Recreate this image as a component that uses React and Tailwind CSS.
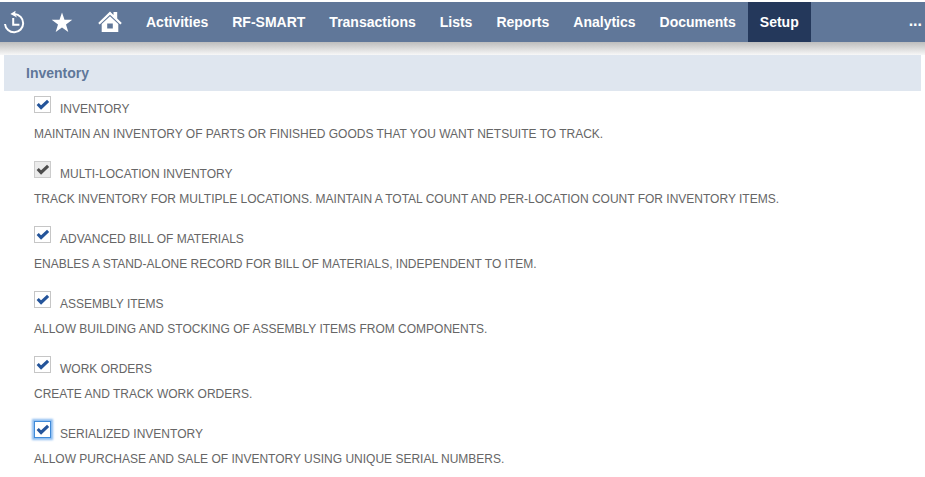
const tabs = ["Activities", "RF-SMART", "Transactions", "Lists", "Reports", "Analytics", "Documents", "Setup"];

const features = [
  { label: "INVENTORY", text: "MAINTAIN AN INVENTORY OF PARTS OR FINISHED GOODS THAT YOU WANT NETSUITE TO TRACK." },
  {
    label: "MULTI-LOCATION INVENTORY",
    text: "TRACK INVENTORY FOR MULTIPLE LOCATIONS. MAINTAIN A TOTAL COUNT AND PER-LOCATION COUNT FOR INVENTORY ITEMS.",
    state: "disabled",
  },
  { label: "ADVANCED BILL OF MATERIALS", text: "ENABLES A STAND-ALONE RECORD FOR BILL OF MATERIALS, INDEPENDENT TO ITEM." },
  { label: "ASSEMBLY ITEMS", text: "ALLOW BUILDING AND STOCKING OF ASSEMBLY ITEMS FROM COMPONENTS." },
  { label: "WORK ORDERS", text: "CREATE AND TRACK WORK ORDERS." },
  {
    label: "SERIALIZED INVENTORY",
    text: "ALLOW PURCHASE AND SALE OF INVENTORY USING UNIQUE SERIAL NUMBERS.",
    state: "focused",
  },
];

const boxStyles = {
  normal: "border-[#c6c6c6] bg-white text-[#24549a]",
  disabled: "border-[#cccccc] bg-[#ebebeb] text-[#4d4d4d]",
  focused: "border-[#3f8ad8] bg-white text-[#24549a] shadow-[0_0_2px_2px_#8cbcf0]",
};

function CheckBox({ state = "normal" }) {
  return (
    <span
      role="checkbox"
      aria-checked="true"
      aria-disabled={state === "disabled"}
      className={`flex size-[17px] shrink-0 items-center justify-center border ${boxStyles[state]}`}
    >
      <svg width="15" height="15" viewBox="0 0 15 15" fill="none" stroke="currentColor" strokeWidth="3.1">
        <path d="M2.7 7L6.1 10.5L13.1 3.9" />
      </svg>
    </span>
  );
}

function HistoryIcon() {
  return (
    <svg width="22" height="24" viewBox="0 0 22 24" fill="none" stroke="white" strokeWidth="2">
      <path d="M2 14A9.1 9.1 0 1 0 11.5 4.1H10" />
      <path d="M7.4 4L12.6 .8L12 4L14 7.4Z" fill="white" stroke="none" />
      <path d="M10.2 8V14.8H16.4" />
    </svg>
  );
}

function StarIcon() {
  return (
    <svg width="22" height="21" viewBox="0 0 22 21" fill="white">
      <path d="M11 .5L13.5 7.8H21.3L15 12.4L17.3 20L11 15.4L4.7 20L7 12.4L.7 7.8H8.5Z" />
    </svg>
  );
}

function HomeIcon() {
  return (
    <svg width="24" height="22" viewBox="0 0 24 22" fill="white">
      <path d="M.2 12L12 .6L15.5 4V1H19.2V7.6L23.8 12L22.3 13.5L12 3.7L1.7 13.5Z" />
      <path fillRule="evenodd" d="M12 5.3L20.3 13V21H3.7V13ZM9.2 12.5V17.5H14.8V12.5Z" />
    </svg>
  );
}

export default function App() {
  return (
    <div className="h-[477px] w-[925px] overflow-hidden bg-white pt-0.5 font-['Liberation_Sans',Arial,sans-serif]">
      <nav className="flex h-10 items-stretch bg-[#607799] text-sm font-bold text-white">
        <div className="flex w-[134px] shrink-0 items-center pl-[3px]">
          <HistoryIcon />
          <span className="ml-[26px]"><StarIcon /></span>
          <span className="ml-[25px]"><HomeIcon /></span>
        </div>
        {tabs.map((tab) => (
          <a key={tab} className={`flex items-center px-3 ${tab === "Setup" ? "bg-[#24385b]" : ""}`}>
            {tab}
          </a>
        ))}
        <span className="ml-auto flex items-center pr-[3px] pb-0.5 text-base">...</span>
      </nav>
      <div className="h-[13px] bg-linear-to-b from-[#bdbdbd] to-[#f8f8f8]" />
      <main>
        <h2 className="mx-1 flex h-9 items-center bg-[#dfe6ef] pl-[22px] text-sm font-bold text-[#607799]">Inventory</h2>
        <ul className="pt-[5px] pl-[34px] text-xs text-[#666666]">
          {features.map((f) => (
            <li key={f.label} className="h-[65px]">
              <div className="flex h-[25px] items-start">
                <CheckBox state={f.state} />
                <span className="mt-[5px] ml-[9px] leading-4">{f.label}</span>
              </div>
              <p className="mt-[5px] leading-4 whitespace-nowrap">{f.text}</p>
            </li>
          ))}
        </ul>
      </main>
    </div>
  );
}
